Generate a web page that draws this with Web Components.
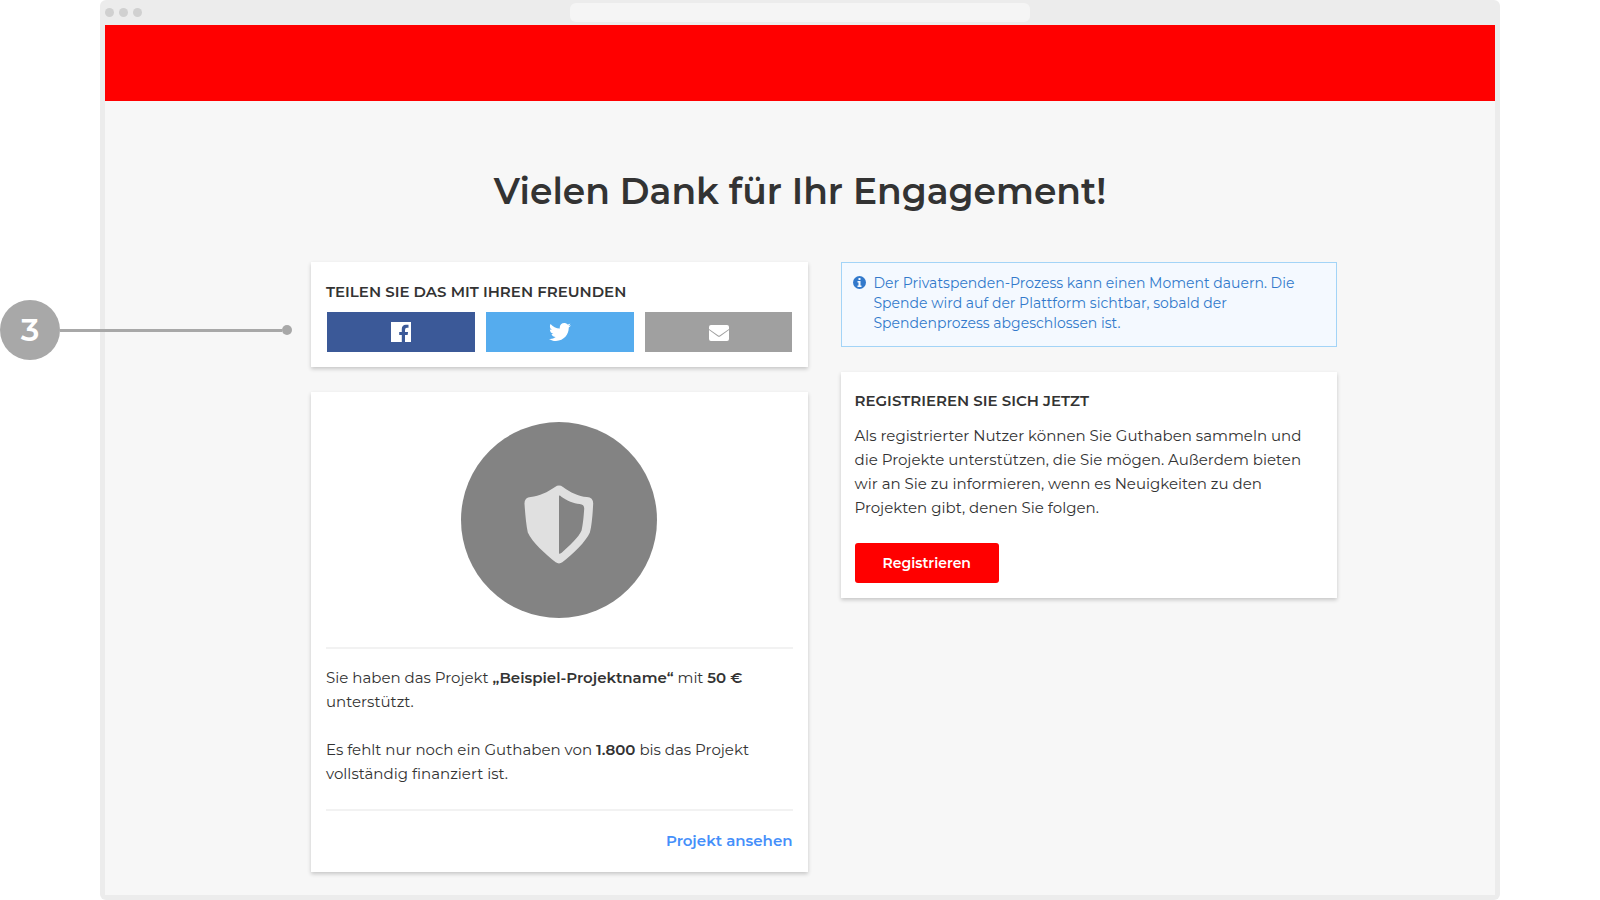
<!DOCTYPE html>
<html lang="de">
<head>
<meta charset="utf-8">
<meta name="viewport" content="width=device-width, initial-scale=1">
<title>Vielen Dank für Ihr Engagement!</title>
<style>
  html, body { margin: 0; }
  body {
    background: #fff;
    color: #333;
    font: 400 15px/24px Montserrat, Inter, "Open Sans", sans-serif;
    font-variant-ligatures: none;
  }
  strong { font-weight: 600; }
</style>
</head>
<body>
<step-callout>3</step-callout>
<browser-frame>
  <site-header></site-header>
  <thank-you-page>
    <span slot="title">Vielen Dank für Ihr Engagement!</span>
    <content-card slot="left">
      <card-heading>Teilen Sie das mit Ihren Freunden</card-heading>
      <share-bar></share-bar>
    </content-card>
    <content-card slot="left">
      <project-summary>
        <span slot="support">Sie haben das Projekt <strong>„Beispiel-Projektname“</strong> mit <strong>50 €</strong> unterstützt.</span>
        <span slot="missing">Es fehlt nur noch ein Guthaben von <strong>1.800</strong> bis das Projekt vollständig finanziert ist.</span>
      </project-summary>
    </content-card>
    <info-notice slot="right">Der Privatspenden-Prozess kann einen Moment dauern. Die Spende wird auf der Plattform sichtbar, sobald der Spendenprozess abgeschlossen ist.</info-notice>
    <content-card slot="right" compact>
      <card-heading>Registrieren Sie sich jetzt</card-heading>
      <register-panel>Als registrierter Nutzer können Sie Guthaben sammeln und die Projekte unterstützen, die Sie mögen. Außerdem bieten wir an Sie zu informieren, wenn es Neuigkeiten zu den Projekten gibt, denen Sie folgen.</register-panel>
    </content-card>
  </thank-you-page>
</browser-frame>

<script>
const define = (name, html) => {
  const template = document.createElement('template');
  template.innerHTML = html;
  customElements.define(name, class extends HTMLElement {
    constructor() {
      super();
      this.attachShadow({ mode: 'open' }).append(template.content.cloneNode(true));
    }
  });
};

define('browser-frame', `
<style>
  :host { display: flex; flex-direction: column; box-sizing: border-box; min-height: 100vh; margin: 0 100px;
    padding: 0 5px 5px; background: #ececec; border-radius: 6px; }
  .bar { display: grid; grid-template-columns: 1fr 460px 1fr; align-items: center; height: 25px; }
  .dots { display: flex; gap: 5px; }
  .dots i { width: 9px; height: 9px; border-radius: 50%; background: #d0d0d0; }
  .address { height: 19px; border-radius: 6px; background: #f5f5f5; }
  .view { flex: 1; background: #f7f7f7; }
</style>
<div class="bar"><div class="dots"><i></i><i></i><i></i></div><div class="address"></div></div>
<div class="view"><slot></slot></div>`);

define('site-header', `
<style>:host { display: block; height: 76px; background: #f00; }</style>`);

// Numbered marker with a leader line, laid over the page.
define('step-callout', `
<style>
  :host { position: absolute; z-index: 1; top: 300px; left: 0; width: 292px; display: flex; align-items: center; }
  b { width: 60px; height: 60px; border-radius: 50%; background: #a8a8a8; color: #fff;
    font-size: 32px; font-weight: 600; line-height: 60px; text-align: center; }
  .line { flex: 1; height: 3px; background: #a8a8a8; }
  .end { width: 10px; height: 10px; border-radius: 50%; background: #a8a8a8; }
</style>
<b><slot></slot></b><span class="line"></span><span class="end"></span>`);

define('thank-you-page', `
<style>
  :host { display: block; padding: 68px 158px 23px 206px; }
  h1 { margin: 0 -158px 49px -206px; font-size: 36px; line-height: 44px; font-weight: 600; text-align: center; }
  .columns { display: grid; grid-template-columns: 1fr 1fr; gap: 33px; align-items: start; }
  .column { display: grid; gap: 25px; }
</style>
<h1><slot name="title"></slot></h1>
<div class="columns">
  <div class="column"><slot name="left"></slot></div>
  <div class="column"><slot name="right"></slot></div>
</div>`);

define('content-card', `
<style>
  :host { display: block; padding: 15px; background: #fff; box-shadow: 0 2px 4px rgba(0, 0, 0, .2); }
  :host([compact]) { padding: 14px 14px 15px; }
</style>
<slot></slot>`);

define('card-heading', `
<style>
  :host { display: block; margin-bottom: 8px; }
  h2 { margin: 0; padding-top: 3px; font-size: 15px; line-height: 24px; font-weight: 600; text-transform: uppercase; }
</style>
<h2><slot></slot></h2>`);

define('share-bar', `
<style>
  :host { display: grid; grid-template-columns: repeat(3, 1fr); gap: 11px; padding-left: 1px; }
  button { display: grid; place-items: center; height: 40px; margin: 0; padding: 0; border: 0; color: #fff; cursor: pointer; }
  svg { display: block; fill: currentColor; }
  .fb { background: #3b5998; }
  .tw { background: #55acee; }
  .mail { background: #a0a0a0; padding-top: 2px; }
</style>
<button class="fb" aria-label="Facebook"><svg width="20" height="20" viewBox="0 0 20 20"><path d="M0 0H20V20H14V13h2.6l.5-3H14V8q0-2.2 2-2.2h1.5V2.8h-2.6c-2.7 0-4.1 1.7-4.1 4.3V10H8.2v3h2.6v7H0z"/></svg></button>
<button class="tw" aria-label="Twitter"><svg width="22" height="22" viewBox="0 0 512 512"><path d="M459.4 151.7c.3 4.6.3 9.1.3 13.7 0 138.7-105.6 298.6-298.6 298.6-59.500 0-114.700-17.200-161.100-47.100 8.400 1 16.600 1.300 25.300 1.300 49.100 0 94.200-16.600 130.300-44.800-46.100-1-84.800-31.200-98.100-72.800 6.500 1 13 1.600 19.800 1.600 9.400 0 18.800-1.300 27.600-3.600-48.100-9.700-84.100-52-84.100-103v-1.300c14 7.800 30.200 12.700 47.400 13.300-28.300-18.800-46.800-51-46.800-87.400 0-19.500 5.200-37.400 14.300-53 51.700 63.700 129.300 105.300 216.400 109.800-1.600-7.800-2.600-15.900-2.600-24 0-57.800 46.800-104.900 104.900-104.900 30.200 0 57.500 12.700 76.700 33.100 23.700-4.500 46.500-13.300 66.600-25.300-7.800 24.400-24.400 44.800-46.100 57.800 21.100-2.300 41.600-8.100 60.400-16.200-14.300 20.800-32.200 39.300-52.600 54.300z"/></svg></button>
<button class="mail" aria-label="E-Mail"><svg width="20" height="16" viewBox="0 0 20 16"><path d="M2 0H18Q20 0 20 2V4L11 10.300Q10 11 9 10.300L0 4V2Q0 0 2 0ZM0 5L8.600 11.200Q10 12.200 11.400 11.200L20 5V14Q20 16 18 16H2Q0 16 0 14Z"/></svg></button>`);

define('project-summary', `
<style>
  :host { display: block; }
  .badge { display: grid; place-items: center; box-sizing: border-box; width: 196px; height: 196px; margin: 15px auto 29px;
    padding-top: 9px; border-radius: 50%; background: #838383; }
  hr { height: 2px; margin: 0; border: 0; background: #f2f2f2; }
  .text { display: grid; gap: 24px; padding: 17px 0 23px; }
  p { margin: 0; }
  footer { padding: 18px 0 4px; text-align: right; }
  a { color: #458ffa; font-weight: 600; text-decoration: none; }
</style>
<div class="badge"><svg width="70" height="79" viewBox="221 225 210 238" aria-hidden="true">
  <path fill="#e0e0e0" fill-rule="evenodd" d="M314 231Q326 222 338 231C360 247 385 260 410 261Q429 262 429 281C427 320 424 350 419 368C408 395 365 435 336 458Q326 465 316 458C287 435 245 397 232 368C227 345 224 310 222 281Q222 262 241 261C267 259 292 246 314 231ZM326 257V432Q330 432 334 429C355 410 386 382 394 362C398 345 400 325 402 296Q402 283 388 282C370 281 350 272 334 261Q330 257 326 257Z"/>
</svg></div>
<hr>
<div class="text"><p><slot name="support"></slot></p><p><slot name="missing"></slot></p></div>
<hr>
<footer><a href="#projekt">Projekt ansehen</a></footer>`);

define('info-notice', `
<style>
  :host { display: flex; gap: 8px; padding: 10px 11px 12px; border: 1px solid #a3d4f7; background: #f4f9ff;
    color: #3279cb; font-size: 14px; line-height: 20px; }
  svg { flex: none; margin-top: 3px; }
  p { margin: 0 0 1px; }
</style>
<svg width="13" height="13" viewBox="0 0 13 13" aria-hidden="true"><circle cx="6.500" cy="6.500" r="6.500" fill="currentColor"/><path fill="#f4f9ff" d="M5.500 2h2v2h-2zM4.500 5h3v4.500h1V11h-4V9.500h1v-3h-1z"/></svg>
<p><slot></slot></p>`);

define('register-panel', `
<style>
  :host { display: block; padding-top: 3px; }
  p { margin: 0 0 23px; }
  button { height: 40px; margin: 0; padding: 0 28px; border: 0; border-radius: 3px; background: #f00; color: #fff;
    font: inherit; font-size: 14px; font-weight: 600; display: block; cursor: pointer; }
</style>
<p><slot></slot></p>
<button>Registrieren</button>`);
</script>
</body>
</html>
